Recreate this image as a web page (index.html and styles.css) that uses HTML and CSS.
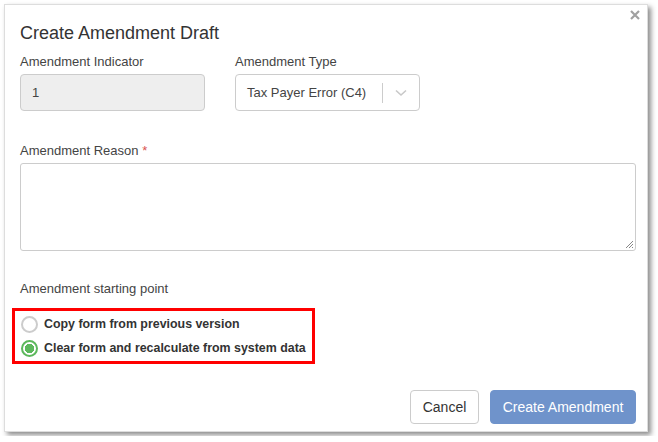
FILE: index.html
```html
<!DOCTYPE html>
<html>
<head>
<meta charset="utf-8">
<link rel="stylesheet" href="styles.css">
</head>
<body>
<div class="modal">
  <div class="header">
    <h1 class="title">Create Amendment Draft</h1>
    <svg class="close" width="10" height="10" viewBox="0 0 10 10"><path d="M1 1 L9 9 M9 1 L1 9" stroke="#a0a0a0" stroke-width="2.2"/></svg>
  </div>
  <div class="row">
    <div class="field">
      <label class="label">Amendment Indicator</label>
      <div class="input disabled">1</div>
    </div>
    <div class="field">
      <label class="label">Amendment Type</label>
      <div class="input select">
        <span class="select-value">Tax Payer Error (C4)</span>
        <span class="select-sep"></span>
        <span class="select-arrow">
          <svg width="12" height="8" viewBox="0 0 12 8"><path d="M1 1.5 L6 6 L11 1.5" fill="none" stroke="#c8c8c8" stroke-width="1.6"/></svg>
        </span>
      </div>
    </div>
  </div>
  <div class="field reason">
    <label class="label">Amendment Reason <span class="req">*</span></label>
    <div class="textarea">
      <svg class="grip" width="9" height="9" viewBox="0 0 9 9"><path d="M8 1 L1 8 M8 4 L4 8 M8 7 L7 8" stroke="#888" stroke-width="1"/></svg>
    </div>
  </div>
  <div class="start">
    <div class="label">Amendment starting point</div>
    <div class="options">
      <div class="option"><span class="radio"></span><span class="opt-text">Copy form from previous version</span></div>
      <div class="option"><span class="radio checked"></span><span class="opt-text">Clear form and recalculate from system data</span></div>
    </div>
  </div>
  <div class="footer">
    <button class="btn cancel">Cancel</button>
    <button class="btn primary">Create Amendment</button>
  </div>
</div>
</body>
</html>
```

FILE: styles.css
```css
* { box-sizing: border-box; }
html, body { margin: 0; padding: 0; background: #fff; }
body {
  font-family: "Liberation Sans", Arial, sans-serif;
  color: #333;
  padding: 4px;
}
.modal {
  width: 644px;
  height: 428px;
  background: #fff;
  border: 1px solid #ddd;
  box-shadow: 3px 3px 5px rgba(0,0,0,0.45);
  padding: 0 11px 0 15px;
  display: flex;
  flex-direction: column;
}
.header {
  display: flex;
  justify-content: space-between;
  align-items: flex-start;
  height: 49px;
}
.title {
  margin: 17px 0 0 0;
  font-size: 18px;
  line-height: 22px;
  font-weight: 400;
  color: #333;
}
.close {
  margin-top: 5px;
  margin-right: -4px;
}
.row { display: flex; gap: 30px; }
.field { display: flex; flex-direction: column; }
.label {
  font-size: 13px;
  color: #444;
  line-height: 16px;
  margin-bottom: 4px;
}
.input {
  width: 185px;
  height: 37px;
  border: 1px solid #ccc;
  border-radius: 4px;
  font-size: 13px;
  color: #444;
  padding-left: 11px;
  display: flex;
  align-items: center;
}
.input.disabled { background: #eee; }
.select { padding-right: 0; }
.select-value { flex: 1; }
.select-sep { width: 1px; height: 20px; background: #ccc; }
.select-arrow { width: 36px; display: flex; justify-content: center; }
.reason { margin-top: 32px; }
.reason .label { margin-bottom: 4px; }
.req { color: #d9534f; }
.textarea {
  width: 616px;
  height: 88px;
  border: 1px solid #ccc;
  border-radius: 3px;
  position: relative;
}
.grip { position: absolute; right: 1px; bottom: 1px; }
.start { margin-top: 30px; margin-left: -8px; }
.start .label { margin-left: 8px; margin-bottom: 11px; }
.options {
  width: 303px;
  height: 56px;
  border: 3px solid #f00;
  padding: 1px 0 0 6px;
}
.option { display: flex; align-items: center; height: 24px; }
.radio {
  width: 17px;
  height: 17px;
  border: 2px solid #ccc;
  border-radius: 50%;
  margin-right: 6px;
  background: #fff;
  flex: none;
}
.radio.checked {
  border-color: #5cb85c;
  background: radial-gradient(circle, #5cb85c 0 4.5px, #fff 5px);
}
.opt-text { font-size: 12.4px; font-weight: 700; color: #333; white-space: nowrap; }
.footer {
  margin-top: auto;
  margin-bottom: 7px;
  display: flex;
  justify-content: flex-end;
  gap: 11px;
}
.btn {
  height: 34px;
  border-radius: 4px;
  font-family: inherit;
  font-size: 14px;
  padding: 0;
  white-space: nowrap;
}
.cancel { width: 69px; background: #fff; border: 1px solid #ccc; color: #333; }
.primary { width: 146px; background: #6f93cb; border: 1px solid #6f93cb; color: #fff; }
```
